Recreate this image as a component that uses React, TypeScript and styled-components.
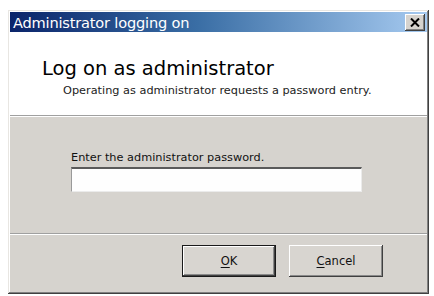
import React from "react";
import styled, { createGlobalStyle } from "styled-components";

const Global = createGlobalStyle`
  html, body { margin: 0; padding: 0; background: #ffffff; }
  body { padding: 10px 0 0 8px; font-family: "DejaVu Sans", "Liberation Sans", sans-serif; }
`;

const Window = styled.div`
  width: 421px;
  height: 284px;
  box-sizing: border-box;
  background: #d6d3ce;
  padding: 2px;
  display: flex;
  flex-direction: column;
  box-shadow: inset -1px -1px 0 #404040, inset 1px 1px 0 #e8e6e2,
    inset -2px -2px 0 #808080, inset 2px 2px 0 #ffffff;
`;

const TitleBar = styled.div`
  height: 20px;
  display: flex;
  align-items: center;
  justify-content: space-between;
  padding: 0 2px 0 3px;
  background: linear-gradient(to right, #0a246a 0%, #3a6ea5 45%, #a6caf0 100%);
`;

const TitleText = styled.span`
  color: #ffffff;
  font-size: 14.6px;
  letter-spacing: -0.2px;
  white-space: nowrap;
`;

const CloseButton = styled.div`
  width: 20px;
  height: 17px;
  box-sizing: border-box;
  background: #d6d3ce;
  display: flex;
  align-items: center;
  justify-content: center;
  box-shadow: inset -1px -1px 0 #404040, inset 1px 1px 0 #ffffff,
    inset -2px -2px 0 #808080;
`;

const Header = styled.div`
  height: 84px;
  background: #ffffff;
  display: flex;
  flex-direction: column;
  padding: 26px 0 0 32px;
  box-sizing: border-box;
  border-bottom: 1px solid #a0a0a0;
`;

const Heading = styled.div`
  font-size: 19.5px;
  color: #000;
  line-height: 22px;
  white-space: nowrap;
`;

const SubText = styled.div`
  font-size: 11.3px;
  color: #222;
  margin: 4px 0 0 21px;
  white-space: nowrap;
`;

const Body = styled.div`
  height: 118px;
  box-sizing: border-box;
  padding: 34px 0 0 61px;
  display: flex;
  flex-direction: column;
  border-top: 1px solid #ffffff;
  border-bottom: 1px solid #a0a0a0;
`;

const Label = styled.div`
  font-size: 11.3px;
  color: #111;
  line-height: 14px;
  white-space: nowrap;
`;

const Input = styled.div`
  margin-top: 2px;
  width: 291px;
  height: 25px;
  box-sizing: border-box;
  background: #fefefe;
  border-top: 2px solid #5a5a5a;
  border-left: 1px solid #9a9a9a;
  border-right: 1px solid #ebebeb;
  border-bottom: 1px solid #ebebeb;
`;

const Footer = styled.div`
  flex: 1;
  border-top: 1px solid #ffffff;
  display: flex;
  justify-content: flex-end;
  align-items: flex-start;
  gap: 13px;
  padding: 10px 44px 0 0;
`;

const Button = styled.div<{ $default?: boolean }>`
  width: 94px;
  height: 32px;
  box-sizing: border-box;
  display: flex;
  align-items: center;
  justify-content: center;
  font-size: 11.5px;
  color: #111;
  background: #d8d5d0;
  border: ${(p) => (p.$default ? "1px solid #1a1a1a" : "none")};
  box-shadow: inset -1px -1px 0 #404040, inset 1px 1px 0 #ffffff,
    inset -2px -2px 0 #8a8a8a;
  u { text-decoration: underline; text-underline-offset: 2px; }
`;

export default function App() {
  return (
    <>
      <Global />
      <Window>
        <TitleBar>
          <TitleText>Administrator logging on</TitleText>
          <CloseButton>
            <svg width="10" height="9" viewBox="0 0 10 9">
              <path d="M1 0.5 L9 8.5 M9 0.5 L1 8.5" stroke="#000" strokeWidth="2" />
            </svg>
          </CloseButton>
        </TitleBar>
        <Header>
          <Heading>Log on as administrator</Heading>
          <SubText>Operating as administrator requests a password entry.</SubText>
        </Header>
        <Body>
          <Label>Enter the administrator password.</Label>
          <Input />
        </Body>
        <Footer>
          <Button $default>
            <span><u>O</u>K</span>
          </Button>
          <Button>
            <span><u>C</u>ancel</span>
          </Button>
        </Footer>
      </Window>
    </>
  );
}
